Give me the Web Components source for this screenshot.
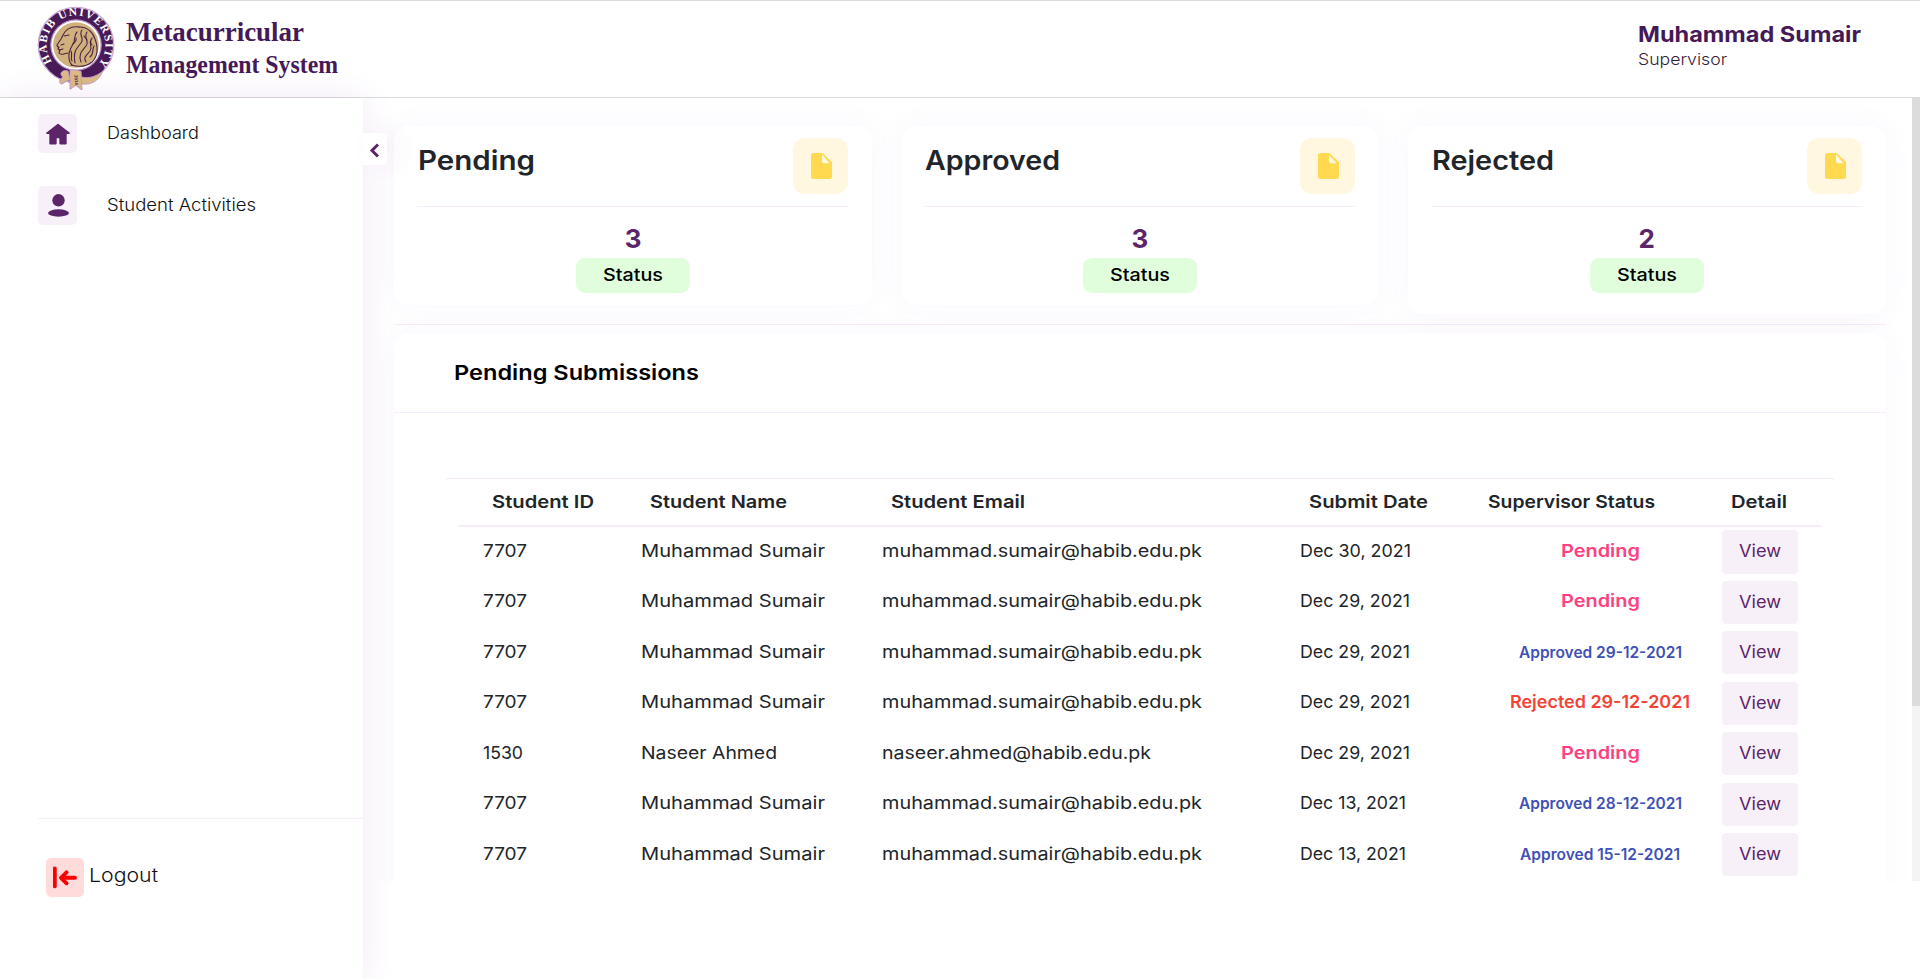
<!DOCTYPE html>
<html lang="en">
<head>
<meta charset="utf-8">
<title>Metacurricular Management System</title>
<style>
  html, body { margin: 0; height: 100%; background: #fff; overflow: hidden; }
  body { font-family: Inter, "Open Sans", sans-serif; color: #212529; }
</style>
</head>
<body>
<mms-app></mms-app>
<script>
const define = (name, html, setup) => {
  const tpl = document.createElement('template');
  tpl.innerHTML = html;
  customElements.define(name, class extends HTMLElement {
    connectedCallback() {
      if (this.shadowRoot) return;
      const root = this.attachShadow({ mode: 'open' });
      root.appendChild(tpl.content.cloneNode(true));
      if (setup) setup.call(this, root);
    }
  });
};

/* One line of text stretched to a given width */
define('fit-text', `
<style>
  :host { display: inline-block; white-space: nowrap; text-align: left; overflow: visible; }
  span { display: inline-block; transform-origin: 0 50%; }
</style><span><slot></slot></span>`, function (root) {
  const span = root.querySelector('span');
  const w = +this.getAttribute('w');
  const natural = span.offsetWidth ? span.getBoundingClientRect().width : w;
  this.style.width = w + 'px';
  span.style.transform = 'scaleX(' + (w / natural) + ')';
});

define('university-seal', `
<style>:host { display: block; width: 80px; height: 88px; } svg { display: block; }</style>
<svg width="80" height="88" viewBox="0 0 80 88">
  <defs><path id="arc" d="M17.8 62.2A29.4 29.4 0 1 1 62.2 62.2"/></defs>
  <circle cx="40" cy="43" r="37.7" fill="#481a58" stroke="#c9a6d3" stroke-width="1.3"/>
  <circle cx="40" cy="43" r="25.2" fill="#fff" stroke="#b58bc2" stroke-width="1.2"/>
  <circle cx="40" cy="43" r="22.8" fill="#d0b07c"/>
  <text font-family="Liberation Serif, serif" font-weight="700" font-size="11.5" fill="#fff"><textPath href="#arc" textLength="131" startOffset="3">HABIB UNIVERSITY</textPath></text>
  <g fill="none" stroke="#4b2145" stroke-width="1.1" stroke-linecap="round" stroke-linejoin="round">
    <path d="M43 25c-7-1-13 2-16 8l-2 4-4 6c0 2 2 2 2 2l-1 2 2 1-1 3c2 3 6 0 9 0"/>
    <path d="M28 34l5-1M25 43l3-1M23 48l4-1"/>
    <path d="M43 25c8 0 14 5 16 12 3 8 3 17-3 23-6 5-14 5-21 3"/>
    <path d="M41 30c-4 4-1 8-4 12-3 5-5 9-4 14 0 3 1 5 3 7"/>
    <path d="M46 28c-4 5 3 8-1 13-5 6-8 9-6 20"/>
    <path d="M51 30c-4 6 3 9-1 14-4 5-8 8-5 16"/>
    <path d="M56 36c-4 5 1 9-2 13-4 5-7 6-4 11"/>
    <path d="M58 44c-2 4 0 8-4 11M35 49c2 4-1 6 1 10M40 36c1 3-2 5-3 6M48 34l3 4M54 40l2 3"/>
  </g>
  <g fill="#dcbb85" stroke="#c69bc9" stroke-width="1">
    <path d="M32 69c-7-2-9 4-5 6-4 2-4 6-2 7 3 0 5-4 9-4zM45 75c9 2 15-1 21-5-3 9-11 13-21 12z"/>
    <path d="M34 68l11 2 1 19-6-5-6 4z" transform="translate(0 -.7)"/>
  </g>
  <text transform="translate(38.3 73) rotate(86)" font-family="Liberation Serif, serif" font-size="5" fill="#4b2145">2014</text>
</svg>`);

define('app-header', `
<style>
  :host { display: flex; box-sizing: border-box; height: 98px; border-top: 1px solid #dcdcdc; border-bottom: 1px solid #dadada; background: #fff; padding: 1px 59px 0 36px; justify-content: space-between; }
  .brand { display: flex; gap: 10px; color: #451957; font: 700 27px/32px "Liberation Serif", serif; }
  .words { display: flex; flex-direction: column; padding-top: 14px; }
  .words fit-text + fit-text { font-size: 24.5px; padding-top: 1px; }
  .user { display: flex; flex-direction: column; color: #451957; padding-top: 19px; width: 223px; }
  .name { font-weight: 700; font-size: 21px; line-height: 28px; }
  .role { font-weight: 300; font-size: 16.5px; line-height: 20px; color: #33213c; }
</style>
<div class="brand"><university-seal></university-seal>
  <div class="words"><fit-text w="178">Metacurricular</fit-text><fit-text w="212">Management System</fit-text></div>
</div>
<div class="user"><fit-text class="name" w="223">Muhammad Sumair</fit-text><fit-text class="role" w="89">Supervisor</fit-text></div>`);

const icons = {
  home: '<path d="M12 2.6 1 11.2h3.1v10.4h5.8v-6.2h4.2v6.2h5.8V11.2H23z" fill="#5b2568" stroke="#5b2568" stroke-width="1.6" stroke-linejoin="round"/>',
  user: '<circle cx="12.5" cy="6.3" r="6.2" fill="#5b2568"/><ellipse cx="12.5" cy="19" rx="10.5" ry="3.7" fill="#5b2568"/>',
  exit: '<path d="M1.8 2.4v18M22 11.8H8M13.5 6.3l-5.5 5.5 5.5 5.5" fill="none" stroke="red" stroke-width="3.9" stroke-linecap="round" stroke-linejoin="round"/>'
};

define('side-bar', `
<style>
  :host { display: flex; flex-direction: column; box-sizing: border-box; position: relative; z-index: 2; background: #fff; padding: 16px 0 0 38px; box-shadow: 0 0 32px rgba(140,50,170,.11); }
  nav { display: flex; flex-direction: column; gap: 33px; box-sizing: border-box; flex: none; height: 705px; border-bottom: 1px solid #f7ecf9; }
  .item { display: flex; height: 39px; align-items: center; gap: 30px; font-weight: 300; font-size: 17px; line-height: 24px; color: #111; }
  .box { display: grid; place-items: center; width: 39px; height: 39px; border-radius: 5px; background: #f7f0f9; }
  .item fit-text { margin-top: -1px; }
  .out { margin: 39px 0 0 8px; gap: 5px; font-size: 18.5px; }
  .out .box { background: #ffdbdb; width: 38px; }
  .out fit-text { margin-top: -5px; }
  .toggle { position: absolute; left: 363px; top: 35px; width: 24px; height: 32px; background: #fff; border-radius: 0 4px 4px 0; box-shadow: 10px 0 24px rgba(140,50,170,.06); display: grid; place-items: center; }
</style>
<nav>
  <div class="item"><span class="box"><svg width="24" height="24" viewBox="0 0 24 24">${icons.home}</svg></span><fit-text w="92">Dashboard</fit-text></div>
  <div class="item"><span class="box"><svg width="24" height="24" viewBox="0 0 24 24">${icons.user}</svg></span><fit-text w="149">Student Activities</fit-text></div>
</nav>
<div class="item out"><span class="box"><svg width="24" height="24" viewBox="0 0 24 24">${icons.exit}</svg></span><fit-text w="69">Logout</fit-text></div>
<span class="toggle"><svg width="24" height="32" viewBox="0 0 24 32"><path d="M15 11.5 9 17.5l6 6" fill="none" stroke="#5b2568" stroke-width="3"/></svg></span>`);

define('status-card', `
<style>
  :host { display: block; box-sizing: border-box; height: 179px; border-radius: 15px; background: #fff; padding: 12px 24px; box-shadow: 0 0 30px rgba(140,50,170,.05); }
  .top { display: flex; justify-content: space-between; height: 68px; border-bottom: 1px solid #f7ecf9; }
  .title { font-size: 26.5px; font-weight: 600; line-height: 32px; padding-top: 6px; }
  .doc { width: 55px; height: 56px; border-radius: 12px; background: #fff7e0; display: grid; place-items: center; }
  .doc svg { margin-left: 2px; }
  .body { display: flex; flex-direction: column; align-items: center; }
  .num { color: #5b2568; font-size: 26px; font-weight: 700; line-height: 32px; margin-top: 16px; height: 35px; }
  .pill { width: 114px; height: 35px; border-radius: 9px; background: #e0fddc; color: #000; font-weight: 500; font-size: 17.5px; line-height: 34px; text-align: center; }
</style>
<div class="top"><div class="title"><slot name="title"></slot></div>
<span class="doc"><svg width="21" height="26" viewBox="0 0 21 26"><path d="M3 0h8.5L21 9v14.5q0 2.5-2.5 2.5h-16Q0 26 0 23.5v-21Q0 0 3 0z" fill="#ffd950"/><path d="M11 1.6v7q0 1.6 1.6 1.6h6z" fill="#fff7e0"/></svg></span></div>
<div class="body"><div class="num"><slot name="count"></slot></div><div class="pill"><fit-text w="60">Status</fit-text></div></div>`);

define('submission-row', `
<style>
  :host { display: grid; grid-template-columns: 158px 241px 418px 203px 244px 100px; height: 50.45px; font-size: 17.6px; line-height: 48px; }
  div { padding-left: 25px; white-space: nowrap; }
  .status { padding: 0; text-align: center; font-weight: 600; }
  .status fit-text { vertical-align: top; }
  .action { padding: 3.4px 0 0; }
  .Pending { color: #ff4081; } .Rejected { color: #f44336; } .Approved { color: #3f51b5; font-size: 15.6px; line-height: 49px; }
  .btn { display: block; width: 76px; height: 43.2px; border-radius: 4px; background: #f7f0f9; color: #5b2568; text-align: center; font-size: 16.8px; line-height: 42.5px; }
</style>
<div class="id"></div><div class="who"></div><div class="mail"></div><div class="date"></div><div class="status"></div>
<div class="action"><span class="btn"><fit-text w="42">View</fit-text></span></div>`, function (root) {
  const put = (sel, text, w) => {
    const fit = document.createElement('fit-text');
    fit.setAttribute('w', w);
    fit.textContent = text;
    root.querySelector(sel).appendChild(fit);
  };
  const [id, iw, who, ww, mail, mw, date, dw, status, sw] = this.data;
  root.querySelector('.status').classList.add(status.split(' ')[0]);
  put('.id', id, iw); put('.who', who, ww); put('.mail', mail, mw); put('.date', date, dw);
  put('.status', status, sw);
});

define('submissions-panel', `
<style>
  :host { display: block; background: #fff; border-radius: 15px 15px 0 0; height: 620px; box-shadow: 0 0 30px rgba(140,50,170,.05); }
  h2 { margin: 0; box-sizing: border-box; height: 80px; border-bottom: 1px solid #f7ecf9; padding: 26px 0 0 60px; font-size: 20.5px; line-height: 28px; font-weight: 600; color: #000; }
  .table { margin: 65px 51px 0; border-top: 1px solid #f7ecf9; border-radius: 4px; padding: 0 13px; }
  .head { display: grid; grid-template-columns: 158px 241px 418px 203px 244px 100px; height: 46px; border-bottom: 2px solid #f7ecf9; font-size: 17.5px; font-weight: 600; line-height: 46px; }
  .head div { padding-left: 33.6px; } .head div:nth-child(n+5) { padding-left: 10px; } .head div:nth-child(6) { padding-left: 9px; }
</style>
<h2><fit-text w="245">Pending Submissions</fit-text></h2>
<div class="table">
  <div class="head"><div><fit-text w="102">Student ID</fit-text></div><div><fit-text w="137">Student Name</fit-text></div><div><fit-text w="134">Student Email</fit-text></div><div><fit-text w="119">Submit Date</fit-text></div><div><fit-text w="167">Supervisor Status</fit-text></div><div><fit-text w="56">Detail</fit-text></div></div>
  <section></section>
</div>`, function (root) {
  const ms = ['Muhammad Sumair', 184, 'muhammad.sumair@habib.edu.pk', 320];
  [
    ['7707', 44, ...ms, 'Dec 30, 2021', 111, 'Pending', 79],
    ['7707', 44, ...ms, 'Dec 29, 2021', 110, 'Pending', 79],
    ['7707', 44, ...ms, 'Dec 29, 2021', 110, 'Approved 29-12-2021', 163],
    ['7707', 44, ...ms, 'Dec 29, 2021', 110, 'Rejected 29-12-2021', 180],
    ['1530', 40, 'Naseer Ahmed', 136, 'naseer.ahmed@habib.edu.pk', 269, 'Dec 29, 2021', 110, 'Pending', 79],
    ['7707', 44, ...ms, 'Dec 13, 2021', 106, 'Approved 28-12-2021', 163],
    ['7707', 44, ...ms, 'Dec 13, 2021', 106, 'Approved 15-12-2021', 160]
  ].forEach(data => {
    const row = document.createElement('submission-row');
    row.data = data;
    root.querySelector('section').appendChild(row);
  });
});

define('dashboard-view', `
<style>
  :host { display: flex; height: 783px; overflow: hidden; }
  main { flex: 1; padding: 28px 26px 0 31px; min-width: 0; }
  .cards { display: grid; grid-template-columns: repeat(3, 478.2px); gap: 28.6px; height: 198px; align-items: start; border-bottom: 1px solid #f7ecf9; margin-bottom: 8px; }
  status-card:last-child { height: 188px; }
  .bar { width: 8px; background: #f4f4f4; }
  .bar i { display: block; height: 608px; background: #dcdcdc; }
</style>
<main>
  <div class="cards">
    <status-card><fit-text slot="title" w="117">Pending</fit-text><span slot="count">3</span></status-card>
    <status-card><fit-text slot="title" w="135">Approved</fit-text><span slot="count">3</span></status-card>
    <status-card><fit-text slot="title" w="122">Rejected</fit-text><span slot="count">2</span></status-card>
  </div>
  <submissions-panel></submissions-panel>
</main>
<div class="bar"><i></i></div>`);

define('mms-app', `
<style>
  :host { display: grid; height: 979px; grid-template: 98px 881px / 363px 1557px; overflow: hidden; }
  app-header { grid-column: 1 / 3; }
</style>
<app-header></app-header><side-bar></side-bar><dashboard-view></dashboard-view>`);
</script>
</body>
</html>
